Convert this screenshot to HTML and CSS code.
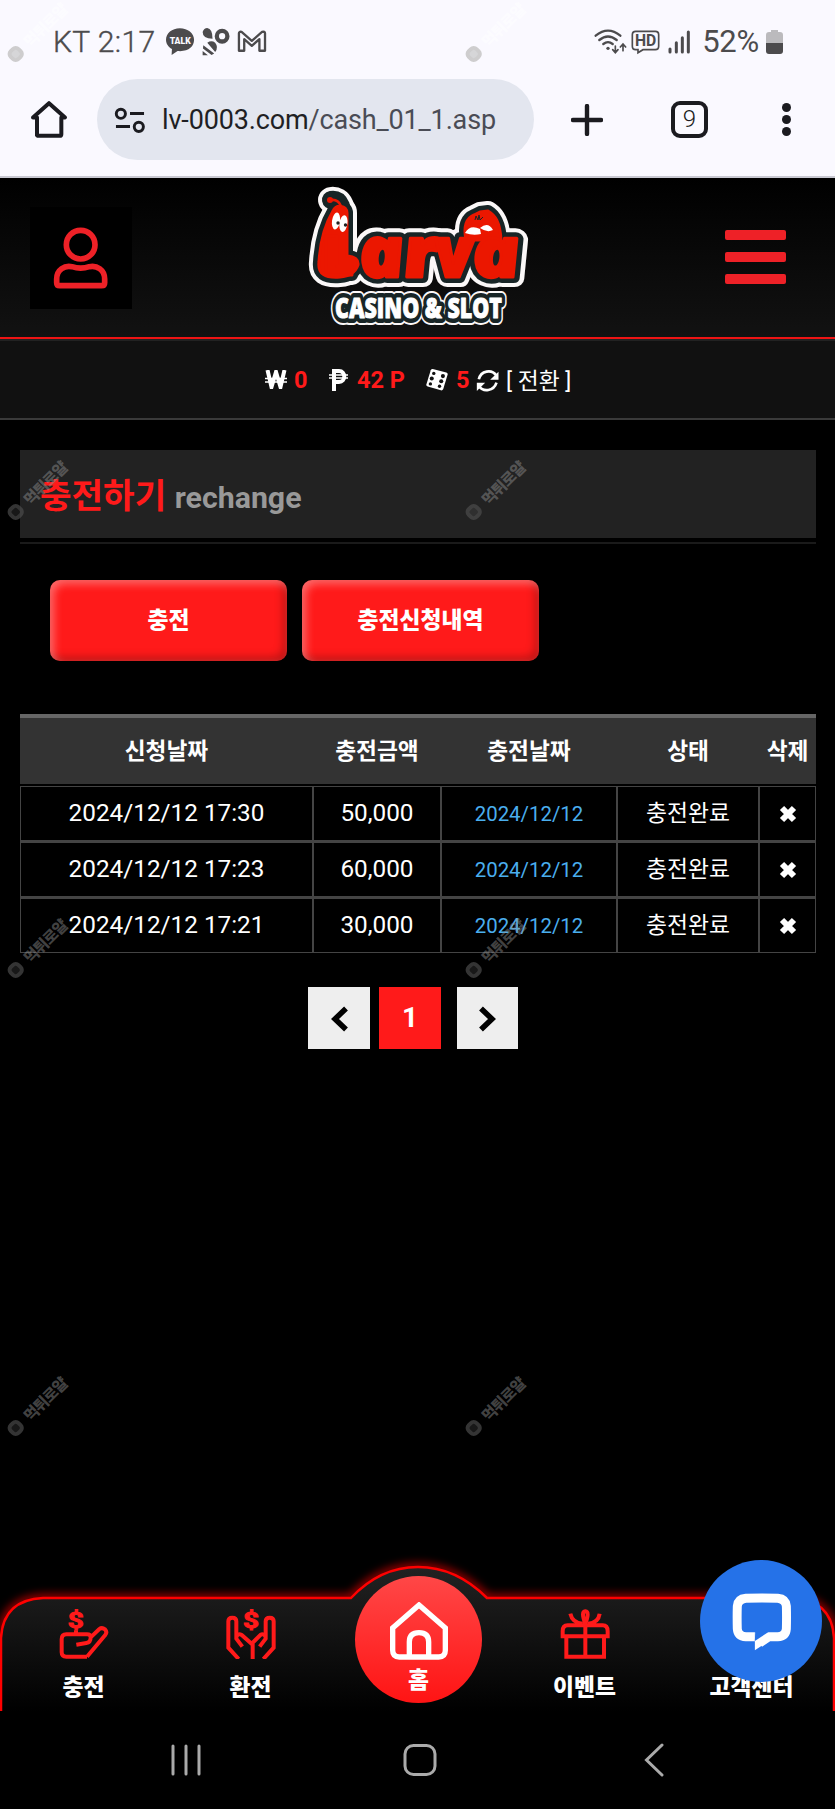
FILE: index.html
```
<!DOCTYPE html>
<html lang="ko">
<head>
    <meta charset="UTF-8">
    <title>충전하기</title>
    <link rel="stylesheet" href="styles.css">
</head>
<body>
<div class="browser">
    <div class="status">
        <span class="clock">KT 2:17</span>
        <svg class="st-left" viewBox="490 75 320 100" width="107" height="33">
            <path d="M539 85c-24 0-42 15-42 35 0 12 7 22 18 28l-1 18 18-12c32 3 50-13 50-34 0-20-19-35-43-35z" fill="#4c4b4d"/>
            <text x="508" y="132" textLength="64" lengthAdjust="spacingAndGlyphs" class="talk">TALK</text>
            <path d="M608 96q4-12 14-12 16 2 16 33-30-1-30-21z" fill="#4c4b4d"/>
            <circle cx="667" cy="109" r="16" fill="none" stroke="#4c4b4d" stroke-width="13"/>
            <path d="M622 129q13-9 24 0 11 14 0 28zM610 136l33 25-8 5-26-20zM608 154l16 13h-16z" fill="#4c4b4d"/>
            <path d="M718 153V100q0-6 8-4l31 27 31-27q9-2 9 4v53h-17v-35l-23 20-23-20v35z" fill="none" stroke="#4c4b4d" stroke-width="7" stroke-linejoin="round"/>
        </svg>
        <svg class="st-right" viewBox="535 80 300 90" width="100" height="30">
            <g fill="none" stroke="#4c4b4d" stroke-width="7" stroke-linecap="round">
                <path d="M543 106q37-30 74 0M554 119q26-21 52 0M566 131q14-11 28 0"/>
                <path d="M602 137v19m-8-8l8 9 8-9M625 151v-19m-8 8l8-9 8 9" stroke-width="5"/>
                <path d="M766 155v-9M785 155v-28M803 155v-43M821 155V95" stroke-width="9"/>
                <path d="M663 93h59q10 0 10 10v35q0 10-10 10h-37l-15 9v-9h-7q-10 0-10-10v-35q0-10 10-10z" stroke-width="5"/>
            </g>
            <circle cx="580" cy="144" r="5" fill="#4c4b4d"/>
            <text x="661" y="138" textLength="64" lengthAdjust="spacingAndGlyphs" class="hd">HD</text>
        </svg>
        <span class="percent">52%</span>
        <svg class="battery" viewBox="0 0 17 24" width="17" height="24">
            <path d="M5 0h7v2h2q3 0 3 3v9H0V5q0-3 3-3h2z" fill="#bbbabd"/>
            <path d="M0 13h17v8q0 3-3 3H3q-3 0-3-3z" fill="#4c4b4d"/>
        </svg>
    </div>
    <div class="toolbar">
        <svg class="home" viewBox="90 300 114 116" width="38" height="39">
            <path d="M111 408V352H99l48-43 48 43H184V402q0 5-5 5H116q-5 0-5-5" fill="none" stroke="#1b1b20" stroke-width="12" stroke-linejoin="round"/>
        </svg>
        <div class="address">
            <svg viewBox="340 316 98 84" width="32" height="28">
                <g fill="none" stroke="#1b1b20" stroke-width="9">
                    <circle cx="361" cy="339" r="14"/>
                    <path d="M389 338h43M346 378h43"/>
                    <circle cx="416" cy="379" r="14"/>
                </g>
            </svg>
            <span class="url">lv-0003.com<i>/cash_01_1.asp</i></span>
        </div>
        <svg class="plus" viewBox="0 0 32 32" width="32" height="32">
            <path d="M16 2v28M2 16h28" stroke="#1b1b20" stroke-width="4.4" stroke-linecap="round"/>
        </svg>
        <div class="tabs">9</div>
        <div class="more"><b></b><b></b><b></b></div>
    </div>
</div>

<div class="header">
    <div class="user">
        <svg viewBox="160 150 168 192" width="56" height="64">
            <g fill="none" stroke="#ee2127" stroke-width="17">
                <circle cx="243" cy="209" r="43"/>
                <path d="M180 332q-9 0-9-9v-11c0-28 24-42 46-37 18 6 34 6 52 0 22-5 46 9 46 37v11q0 9-9 9z"/>
            </g>
        </svg>
    </div>
    <svg class="logo" viewBox="300 178 240 159" width="240" height="159">
        <defs>
            <g id="larva">
                <!-- 애벌레 몸통 -->
                <path d="M333 211c3-7 14-6 14 2V256q12 1 11 9-4 11-18 12-23 2-21-15c1-17 5-36 14-51z"/>
                <path d="M466 240c-3-15 1-22 8-25l6-3 8-1c7 4 12 11 13 29z"/>
                <text class="first" x="322" y="275" textLength="32" lengthAdjust="spacingAndGlyphs">L</text>
                <g class="brand" transform="translate(0 277) skewX(8)">
                    <text x="362" y="0" textLength="45" lengthAdjust="spacingAndGlyphs">a</text>
                    <text x="406" y="0" textLength="34" lengthAdjust="spacingAndGlyphs">r</text>
                    <text x="438" y="0" textLength="38" lengthAdjust="spacingAndGlyphs">v</text>
                    <text x="475" y="0" textLength="48" lengthAdjust="spacingAndGlyphs">a</text>
                </g>
            </g>
            <path id="feeler" d="M331 200q7-1 10 6"/>
            <text id="sub" x="335" y="318" textLength="167" lengthAdjust="spacingAndGlyphs">CASINO &amp; SLOT</text>
        </defs>
        <g stroke-linejoin="round" stroke-linecap="round">
            <use href="#larva" fill="#fff" stroke="#fbf8f8" stroke-width="20"/>
            <use href="#feeler" fill="none" stroke="#fbf8f8" stroke-width="26"/>
            <use href="#larva" fill="#182526" stroke="#182526" stroke-width="12"/>
            <use href="#feeler" fill="none" stroke="#182526" stroke-width="18"/>
            <use href="#larva" fill="#eb1700" stroke="#eb1700" stroke-width="3"/>
            <use href="#feeler" fill="none" stroke="#eb1700" stroke-width="2.5"/>
            <use href="#sub" class="sub" fill="#fbf8f8" stroke="#fbf8f8" stroke-width="14"/>
            <use href="#sub" class="sub" fill="#182526" stroke="#182526" stroke-width="10"/>
            <use href="#sub" class="sub" fill="#fff" stroke="#fff" stroke-width="1"/>
        </g>
        <circle cx="330" cy="200" r="3" fill="#eb1700"/>
        <g fill="#fff">
            <ellipse cx="336" cy="221" rx="4" ry="8.5" transform="rotate(8 336 221)"/>
            <ellipse cx="343.500" cy="223.500" rx="4" ry="8.500" transform="rotate(8 343 223)"/>
            <path d="M465 233q5-9 15-4l1 5q-8 2-16-1zM480 228q8-7 13 2-6 3-13-2z"/>
        </g>
        <circle cx="338" cy="223" r="1.7" fill="#222"/>
        <circle cx="345.500" cy="225" r="1.700" fill="#222"/>
        <path d="M475 220l1-4 2 4 1-5 1 5 3-3" fill="none" stroke="#182526"/>
    </svg>
    <div class="menu"><b></b><b></b><b></b></div>
</div>

<div class="points">
    <svg class="won" viewBox="0 0 22 19" width="22" height="19">
        <path d="M2.500 0l4 17L11 2l4.500 15 4-17" fill="none" stroke="#fff" stroke-width="4"/>
        <path d="M0 8.500h22M0 12h22" stroke="#fff" stroke-width="1.500"/>
    </svg>
    <b class="cash">0</b>
    <svg class="peso" viewBox="0 0 19 22" width="19" height="22">
        <path d="M5 22V2h5c7 0 7 11 0 11H5" fill="none" stroke="#fff" stroke-width="4"/>
        <path d="M0 6h19M0 9h19" stroke="#fff" stroke-width="1.500"/>
    </svg>
    <b class="point">42 P</b>
    <svg class="dice" viewBox="408 576 68 68" width="23" height="23">
        <path d="M428 579l40 10q5 2 4 6l-13 43q-2 5-7 4l-39-11q-5-2-4-6l13-42q2-5 6-4z" fill="#fff"/>
        <g fill="#111">
            <circle cx="431" cy="592" r="5"/><circle cx="458" cy="600" r="6"/>
            <circle cx="425" cy="607" r="6"/><circle cx="453" cy="615" r="6"/>
            <circle cx="421" cy="623" r="5"/><circle cx="448" cy="630" r="5"/>
        </g>
    </svg>
    <b class="coupon">5</b>
    <svg class="refresh" viewBox="558 583 68 66" width="23" height="22">
        <path d="M566 611c6-27 39-31 52-12M619 621c-8 26-40 29-52 11" fill="none" stroke="#fff" stroke-width="8"/>
        <path d="M625 588v24h-25zM560 646v-25h25z" fill="#fff"/>
    </svg>
    <span class="change">[ 전환 ]</span>
</div>

<div class="title">
    <h2>충전하기 <small>rechange</small></h2>
</div>

<div class="buttons">
    <a class="btn">충전</a>
    <a class="btn">충전신청내역</a>
</div>

<table class="list">
    <colgroup><col class="c1"><col class="c2"><col class="c3"><col class="c4"><col class="c5"></colgroup>
    <thead>
    <tr><th>신청날짜</th><th>충전금액</th><th>충전날짜</th><th>상태</th><th>삭제</th></tr>
    </thead>
    <tbody>
    <tr>
        <td>2024/12/12 17:30</td><td>50,000</td><td class="date">2024/12/12</td><td class="state">충전완료</td>
        <td><svg viewBox="0 0 18 18" width="18" height="18"><path d="M3 3l12 12M15 3L3 15"/></svg></td>
    </tr>
    <tr>
        <td>2024/12/12 17:23</td><td>60,000</td><td class="date">2024/12/12</td><td class="state">충전완료</td>
        <td><svg viewBox="0 0 18 18" width="18" height="18"><path d="M3 3l12 12M15 3L3 15"/></svg></td>
    </tr>
    <tr>
        <td>2024/12/12 17:21</td><td>30,000</td><td class="date">2024/12/12</td><td class="state">충전완료</td>
        <td><svg viewBox="0 0 18 18" width="18" height="18"><path d="M3 3l12 12M15 3L3 15"/></svg></td>
    </tr>
    </tbody>
</table>

<div class="paging">
    <a><svg viewBox="0 0 18 26" width="18" height="26"><path d="M15 2.500L4 13l11 10.500"/></svg></a>
    <a class="on">1</a>
    <a class="next"><svg viewBox="0 0 18 26" width="18" height="26"><path d="M3 2.500L14 13 3 23.500"/></svg></a>
</div>

<div class="tabbar">
    <svg class="shape" viewBox="0 1540 835 171" width="835" height="171">
        <defs>
            <linearGradient id="dark" x1="0" y1="0" x2="0" y2="1">
                <stop offset="0" stop-color="#222"/>
                <stop offset="1" stop-color="#000"/>
            </linearGradient>
            <filter id="glow" x="-5%" y="-20%" width="110%" height="140%">
                <feGaussianBlur stdDeviation="5"/>
            </filter>
        </defs>
        <path d="M1 1713V1638Q3 1600 43 1598H351Q380 1567 418 1567T487 1598H792Q832 1600 834 1638V1713" fill="none" stroke="#f00" stroke-width="5" filter="url(#glow)"/>
        <path d="M1 1713V1638Q3 1600 43 1598H351Q380 1567 418 1567T487 1598H792Q832 1600 834 1638V1713" fill="url(#dark)" stroke="#f00" stroke-width="2.500"/>
    </svg>
    <a class="item">
        <svg viewBox="176 206 150 150" width="50" height="50">
            <path d="M260 349H198q-14 0-14-14V297q0-15 14-15h62q11 0 11 9 0 16-13 17l-30 5M271 291l26-25q8-6 17 1 8 9 0 18l-54 64M227 282v-12"/>
            <text x="202" y="264" textLength="48" lengthAdjust="spacingAndGlyphs">$</text>
        </svg>
        <span>충전</span>
    </a>
    <a class="item">
        <svg viewBox="678 206 150 150" width="50" height="50">
            <path d="M716 356l-31-34V243q0-11 12-11 12 0 12 11v52l18 24M709 290q5-12 16-6l33 29v43M790 356l31-34V243q0-11-12-11-12 0-12 11v52l-18 24M797 290q-6-12-16-6l-26 26"/>
            <text x="729" y="264" textLength="48" lengthAdjust="spacingAndGlyphs">$</text>
        </svg>
        <span>환전</span>
    </a>
    <a class="item main">
        <svg viewBox="1168 188 174 174" width="58" height="58">
            <path d="M1196 353q-20 0-20-20V266l79-69 79 69v67q0 20-20 20zM1226 353v-45q0-28 29-28t29 28v45"/>
        </svg>
        <span>홈</span>
    </a>
    <a class="item">
        <svg viewBox="436 206 150 150" width="50" height="50">
            <path d="M455 290v59h113v-59M444 288v-15q0-18 15-18h105q15 0 15 18v15zM512 250v100M512 250q-14-36 0-37 14 1 0 37zM504 250q-31-2-37-30M520 250q31-2 35-30"/>
        </svg>
        <span>이벤트</span>
    </a>
    <a class="item">
        <svg viewBox="0 0 50 50" width="50" height="50"></svg>
        <span>고객센터</span>
    </a>
    <div class="chat">
        <svg viewBox="948 158 178 178" width="59" height="59">
            <path d="M1017 293h-27q-24-1-26-24-1-34 0-68 2-22 26-24 48-2 96 0 24 2 26 24 1 33 0 68-2 23-26 24h-27l-28 19" fill="none" stroke="#fff" stroke-width="27"/>
            <path d="M1017 280v54l48-32-8-22z" fill="#fff"/>
            <path d="M1018 279h40l-41 27z" fill="#2572e8"/>
        </svg>
    </div>
</div>

<div class="sysnav">
    <svg viewBox="0 0 30 34" width="30" height="34"><path d="M2 3v28M15 3v28M28 3v28"/></svg>
    <svg viewBox="0 0 34 34" width="34" height="34"><rect x="2" y="2.500" width="30" height="29" rx="8.500"/></svg>
    <svg viewBox="0 0 20 34" width="20" height="34"><path d="M18 2L2.500 17 18 32"/></svg>
</div>

<div class="marks">
    <span class="light">먹튀로얄</span><span class="light">먹튀로얄</span>
    <span>먹튀로얄</span><span>먹튀로얄</span>
    <span>먹튀로얄</span><span>먹튀로얄</span>
    <span>먹튀로얄</span><span>먹튀로얄</span>
</div>
</body>
</html>
```
FILE: styles.css
```
*{
    margin: 0;
    padding: 0;
    box-sizing: border-box;
}
html,body{
    background-color: #000;
}
body{
    position: relative;
    display: flex;
    flex-direction: column;
    width: 835px;
    height: 1809px;
    overflow: hidden;
    color: #fff;
    font-family: Roboto,"Noto Sans CJK KR",sans-serif;
    font-size: 24.3px;
}
svg{
    display: block;
    flex: none;
}

/* 브라우저 영역 */
.browser{
    height: 178px;
    background-color: #faf9ff;
    border-bottom: 2px solid #c9c9d2;
}
.status{
    display: flex;
    align-items: center;
    height: 79px;
    padding: 4px 52px 0 53px;
    color: #4c4b4d;
    font-size: 30px;
}
.clock{
    width: 110px;
    letter-spacing: 0.4px;
    font-weight: 300;
    -webkit-text-stroke: 0.4px #4c4b4d;
}
.st-left{
    margin-top: -1px;
}
.talk{
    font-size: 27px;
    font-weight: 900;
    fill: #faf9ff;
}
.hd{
    font-size: 47px;
    font-weight: 700;
    fill: #4c4b4d;
}
.st-right{
    margin-left: auto;
}
.percent{
    width: 65px;
    margin-left: 5px;
    margin-right: 2px;
    text-align: center;
    font-size: 31px;
    letter-spacing: -0.3px;
}
.battery{
    margin-left: 1px;
}
.toolbar{
    display: flex;
    align-items: center;
    height: 81px;
    padding: 0 44px 0 30px;
}
.address{
    display: flex;
    align-items: center;
    width: 437px;
    height: 81px;
    margin-left: 29px;
    padding-left: 17px;
    border-radius: 41px;
    background-color: #e3e6ef;
}
.url{
    margin-left: 16px;
    color: #1f1f24;
    font-size: 27px;
    letter-spacing: -0.15px;
    white-space: nowrap;
}
.url i{
    color: #4a4c55;
    font-style: normal;
}
.plus{
    margin-left: 37px;
}
.tabs{
    width: 37px;
    height: 37px;
    margin-left: 68px;
    border: 4px solid #1b1b20;
    border-radius: 9px;
    color: #1b1b20;
    font-size: 24px;
    font-weight: 300;
    line-height: 29px;
    text-align: center;
}
.more{
    display: flex;
    flex-direction: column;
    gap: 3px;
    margin-left: auto;
}
.more b{
    width: 9px;
    height: 9px;
    border-radius: 50%;
    background-color: #1b1b20;
}

/* 상단 */
.header{
    display: flex;
    height: 161px;
    background: linear-gradient(#000,#121212);
    border-bottom: 2px solid #ee1414;
}
.user{
    display: flex;
    justify-content: center;
    width: 102px;
    height: 102px;
    margin: 29px 0 0 30px;
    padding-top: 18px;
    background-color: #000;
}
.logo{
    margin-left: 168px;
}
.menu{
    display: flex;
    flex-direction: column;
    gap: 12px;
    width: 61px;
    margin: 52px 0 0 185px;
}
.menu b{
    height: 10px;
    border-radius: 2px;
    background-color: #ee2127;
}
.brand{
    font-family: "Open Sans",sans-serif;
    font-size: 70px;
    font-weight: 800;
    font-style: italic;
}
.first{
    font-family: "Open Sans",sans-serif;
    font-size: 54px;
    font-weight: 800;
}
.sub{
    font-family: "Open Sans",sans-serif;
    font-size: 29px;
    font-weight: 800;
}
.points{
    display: flex;
    align-items: center;
    height: 81px;
    padding-left: 265px;
    background-color: #111;
    border-top: 2px solid #222;
    border-bottom: 2px solid #3a3a3a;
    font-size: 23.5px;
}
.points b{
    color: #ff1a1a;
    white-space: nowrap;
}
.cash{
    width: 14px;
}
.point{
    width: 50px;
}
.coupon{
    width: 14px;
}
.won{
    margin-right: 7px;
}
.peso{
    margin: 0 9px 0 21px;
}
.dice{
    margin: 0 7px 0 19px;
}
.refresh{
    margin: 3px 7px 0 6px;
}
.change{
    font-size: 22.8px;
}

/* 제목 */
.title{
    height: 94px;
    margin: 30px 19px 0 20px;
    border-bottom: 2px solid #1a1a1a;
}
.title h2{
    height: 88px;
    padding: 2px 0 0 20px;
    background-color: #222;
    color: #ff1a1a;
    font-size: 34.3px;
    line-height: 88px;
}
.title small{
    color: #999;
    font-size: 30.3px;
}
.buttons{
    display: flex;
    gap: 15px;
    margin: 36px 0 0 50px;
}
.btn{
    width: 237px;
    height: 81px;
    border-radius: 10px;
    background-color: #ff1a1a;
    box-shadow: inset 4px 4px 8px rgba(255,255,255,.35),inset -4px -4px 8px rgba(0,0,0,.25);
    font-size: 22.8px;
    font-weight: 900;
    line-height: 81px;
    text-align: center;
}

/* 내역 */
.list{
    width: 796px;
    margin: 53px 0 0 20px;
    table-layout: fixed;
    border-spacing: 0;
    border-collapse: separate;
    text-align: center;
}
.c1{ width: 293px; }
.c2{ width: 128px; }
.c3{ width: 176px; }
.c4{ width: 142px; }
.c5{ width: 57px; }
.list th{
    height: 72px;
    padding-bottom: 4px;
    border-top: 4px solid #666;
    border-bottom: 2px solid #000;
    background-color: #333;
    font-size: 22.7px;
    font-weight: 700;
}
.list td{
    height: 56px;
    padding-bottom: 2px;
    border: 1px solid #444;
    border-bottom-width: 2px;
}
.list tr:last-child td{
    height: 55px;
    border-bottom-width: 1px;
}
.list .date{
    padding-bottom: 0;
    color: #4aaeee;
    font-size: 20.4px;
}
.list .state{
    padding-bottom: 4px;
    font-size: 22.8px;
}
.list td svg{
    margin: 0 auto;
    fill: none;
    stroke: #fff;
    stroke-width: 6;
}
.list td:last-child{
    padding-bottom: 0;
}
.paging{
    display: flex;
    gap: 9px;
    margin: 34px 0 0 308px;
}
.paging a{
    display: flex;
    align-items: center;
    justify-content: center;
    width: 62px;
    height: 62px;
    padding: 2px 0 0 1px;
    background-color: #eee;
    font-size: 28px;
    font-weight: 700;
}
.paging .on{
    padding: 0 0 2px;
    background-color: #ff1a1a;
}
.paging .next{
    margin-left: 7px;
    width: 61px;
    padding: 2px 2px 0 0;
}
.paging svg{
    fill: none;
    stroke: #000;
    stroke-width: 5.5;
}

/* 하단 메뉴 */
.tabbar{
    position: relative;
    display: grid;
    grid-template-columns: repeat(5,1fr);
    height: 171px;
    margin-top: auto;
}
.shape{
    position: absolute;
    left: 0;
    top: 0;
}
.item{
    position: relative;
    display: flex;
    flex-direction: column;
    align-items: center;
    padding-top: 69px;
    font-size: 22.8px;
    font-weight: 900;
}
.item svg{
    fill: none;
    stroke: #ff1a1a;
    stroke-width: 12;
}
.item text{
    fill: #ff1a1a;
    stroke-width: 3;
    font-size: 66px;
    font-weight: 700;
}
.item span{
    margin-top: 12px;
    line-height: 33px;
}
.main{
    width: 127px;
    height: 127px;
    margin: 36px 19px 0 21px;
    padding-top: 26px;
    border-radius: 50%;
    background: linear-gradient(#ff4747,#ff1414);
}
.main svg{
    stroke: #fff;
    stroke-width: 16;
}
.main span{
    margin-top: 4px;
}
.chat{
    position: absolute;
    left: 700px;
    top: 20px;
    display: flex;
    align-items: center;
    justify-content: center;
    width: 122px;
    height: 122px;
    border-radius: 50%;
    background-color: #2572e8;
}
.sysnav{
    display: flex;
    height: 98px;
    padding: 32px 0 0 171px;
}
.sysnav svg{
    fill: none;
    stroke: #aaa;
    stroke-width: 3;
    stroke-linecap: round;
}
.sysnav svg:nth-child(2){
    margin: 0 207px 0 202px;
}

/* 워터마크 */
.marks{
    position: absolute;
    left: 0;
    top: 0;
    display: grid;
    grid-template-columns: 458px 1fr;
    grid-auto-rows: 458px;
    width: 100%;
    height: 100%;
    overflow: hidden;
    pointer-events: none;
}
.marks span{
    display: flex;
    align-items: center;
    gap: 7px;
    width: 76px;
    height: 18px;
    margin: 45px 0 0 8px;
    transform: rotate(-45deg);
    transform-origin: 7px 9px;
    color: rgba(150,150,150,.45);
    font-size: 15.5px;
    font-weight: 900;
    letter-spacing: -0.9px;
    white-space: nowrap;
}
.marks span:before{
    content: "";
    box-sizing: border-box;
    width: 15px;
    height: 15px;
    flex: none;
    border: 4px solid rgba(80,80,80,.5);
    border-radius: 6px;
    background-color: rgba(80,80,80,.3);
}
.marks .light{
    color: rgba(255,255,255,.6);
}
.marks .light:before{
    border-color: rgba(200,200,200,.6);
    background-color: rgba(190,190,190,.6);
}
```
